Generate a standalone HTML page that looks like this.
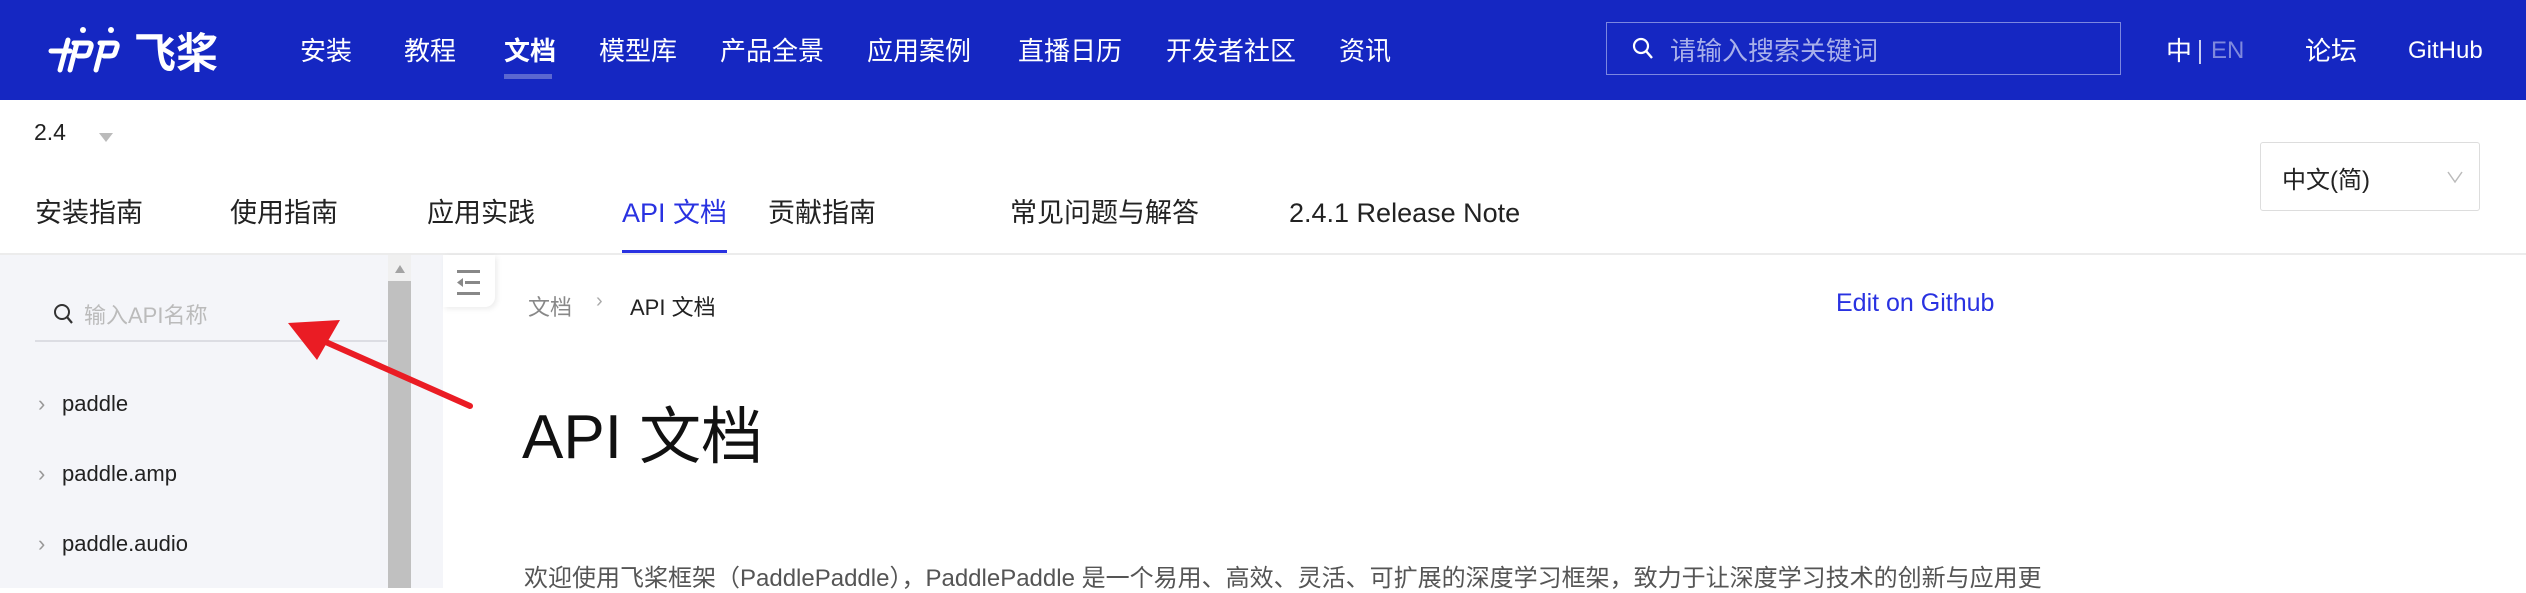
<!DOCTYPE html>
<html><head><meta charset="utf-8"><style>
*{margin:0;padding:0;box-sizing:border-box}
body{width:2526px;height:588px;overflow:hidden;background:#fff;font-family:"Liberation Sans","Noto Sans CJK SC",sans-serif;position:relative}
.a{position:absolute;white-space:nowrap}
.hd{left:0;top:0;width:2526px;height:100px;background:#1527c2}
.nv{top:34px;font-size:26px;color:#fff;line-height:34px}
.tab{top:196px;font-size:27px;color:#222;line-height:34px}
.si{font-size:22px;color:#222;line-height:28px}
</style></head><body>
<div class="a hd"></div>
<svg class="a" style="left:48px;top:24px" width="180" height="54" viewBox="0 0 180 54">
<g stroke="#fff" stroke-width="5" fill="none" stroke-linecap="round">
<line x1="3" y1="27" x2="22" y2="27"/><line x1="20" y1="16" x2="12" y2="46"/>
<path d="M26 19 L40 19 Q44 19 43 23 L41 29 Q40 32 36 32 L30 32"/><line x1="29" y1="19" x2="22" y2="46"/>
<path d="M52 19 L66 19 Q70 19 69 23 L67 29 Q66 32 62 32 L56 32"/><line x1="55" y1="19" x2="48" y2="46"/>
</g>
<circle cx="35" cy="6" r="3" fill="#fff"/><circle cx="63" cy="6" r="3" fill="#fff"/>
<text x="86" y="44" font-size="42" font-weight="bold" fill="#fff" font-family="Noto Sans CJK SC,sans-serif">飞桨</text>
</svg>
<div class="a nv" style="left:300px">安装</div>
<div class="a nv" style="left:404px">教程</div>
<div class="a nv" style="left:504px;font-weight:bold">文档</div>
<div class="a" style="left:504px;top:74px;width:48px;height:5px;background:#5b67d0"></div>
<div class="a nv" style="left:599px">模型库</div>
<div class="a nv" style="left:720px">产品全景</div>
<div class="a nv" style="left:867px">应用案例</div>
<div class="a nv" style="left:1018px">直播日历</div>
<div class="a nv" style="left:1166px">开发者社区</div>
<div class="a nv" style="left:1339px">资讯</div>
<div class="a" style="left:1606px;top:22px;width:515px;height:53px;border:1px solid #7c87e0"></div>
<svg class="a" style="left:1632px;top:37px" width="22" height="24" viewBox="0 0 22 24"><circle cx="9" cy="9" r="7" stroke="#fff" stroke-width="2.2" fill="none"/><line x1="14" y1="14" x2="20" y2="21" stroke="#fff" stroke-width="2.4"/></svg>
<div class="a nv" style="left:1670px;color:#a9b0ea">请输入搜索关键词</div>
<div class="a nv" style="left:2166px">中</div>
<div class="a" style="left:2199px;top:40px;width:2px;height:24px;background:#c9cdf2"></div>
<div class="a nv" style="left:2211px;color:#7f89dd;font-size:24px">EN</div>
<div class="a nv" style="left:2305px">论坛</div>
<div class="a nv" style="left:2408px;font-size:24px">GitHub</div>

<div class="a" style="left:34px;top:119px;font-size:23px;color:#222">2.4</div>
<div class="a" style="left:99px;top:133px;width:0;height:0;border-left:7px solid transparent;border-right:7px solid transparent;border-top:9px solid #bbb"></div>
<div class="a tab" style="left:35px">安装指南</div>
<div class="a tab" style="left:230px">使用指南</div>
<div class="a tab" style="left:427px">应用实践</div>
<div class="a tab" style="left:622px;color:#2932e1">API 文档</div>
<div class="a" style="left:622px;top:250px;width:105px;height:4px;background:#2932e1"></div>
<div class="a tab" style="left:768px">贡献指南</div>
<div class="a tab" style="left:1010px">常见问题与解答</div>
<div class="a tab" style="left:1289px">2.4.1 Release Note</div>
<div class="a" style="left:2260px;top:142px;width:220px;height:69px;border:1px solid #ddd;border-radius:3px"></div>
<div class="a" style="left:2282px;top:160px;font-size:24px;color:#222">中文(简)</div>
<svg class="a" style="left:2446px;top:170px" width="18" height="14"><polyline points="2,2 9,12 16,2" stroke="#bbb" stroke-width="1.5" fill="none"/></svg>
<div class="a" style="left:0;top:253px;width:2526px;height:2px;background:#ececec"></div>

<div class="a" style="left:0;top:255px;width:443px;height:333px;background:#f4f5f9"></div>
<div class="a" style="left:388px;top:255px;width:23px;height:333px;background:#f0f0f0"></div>
<div class="a" style="left:388px;top:281px;width:23px;height:307px;background:#c0c0c0"></div>
<div class="a" style="left:395px;top:265px;width:0;height:0;border-left:5px solid transparent;border-right:5px solid transparent;border-bottom:8px solid #a3a3a3"></div>
<svg class="a" style="left:52px;top:302px" width="24" height="26" viewBox="0 0 24 26"><circle cx="10" cy="10" r="7" stroke="#333" stroke-width="2" fill="none"/><line x1="15" y1="15" x2="20" y2="21" stroke="#333" stroke-width="2.2"/></svg>
<div class="a si" style="left:84px;top:302px;color:#bbb">输入API名称</div>
<div class="a" style="left:35px;top:340px;width:352px;height:2px;background:#dcdde3"></div>
<div class="a si" style="left:38px;top:390px;color:#999">›</div><div class="a si" style="left:62px;top:390px">paddle</div>
<div class="a si" style="left:38px;top:460px;color:#999">›</div><div class="a si" style="left:62px;top:460px">paddle.amp</div>
<div class="a si" style="left:38px;top:530px;color:#999">›</div><div class="a si" style="left:62px;top:530px">paddle.audio</div>

<div class="a" style="left:443px;top:255px;width:52px;height:52px;background:#fff;border-radius:0 0 10px 0;box-shadow:2px 2px 6px rgba(0,0,0,.08)"></div>
<svg class="a" style="left:455px;top:266px" width="28" height="30"><rect x="2" y="4" width="23" height="3" fill="#888"/><rect x="10" y="15" width="15" height="3" fill="#888"/><polygon points="2,16.5 8,12 8,21" fill="#888"/><rect x="2" y="26" width="23" height="3" fill="#888"/></svg>

<svg class="a" style="left:270px;top:315px" width="215" height="100"><line x1="200" y1="91" x2="40" y2="20" stroke="#ea1c24" stroke-width="6" stroke-linecap="round"/><polygon points="18,8 70,5 47,45" fill="#ea1c24"/></svg>

<div class="a" style="left:528px;top:290px;font-size:22px;color:#888">文档</div>
<div class="a" style="left:596px;top:290px;font-size:20px;color:#aaa">›</div>
<div class="a" style="left:630px;top:290px;font-size:22px;color:#222">API 文档</div>
<div class="a" style="left:1836px;top:289px;font-size:25px;color:#2932e1">Edit on Github</div>
<div class="a" style="left:522px;top:400px;font-size:62px;color:#111;line-height:76px">API 文档</div>
<div class="a" style="left:524px;top:558px;font-size:24px;color:#555">欢迎使用飞桨框架（PaddlePaddle），PaddlePaddle 是一个易用、高效、灵活、可扩展的深度学习框架，致力于让深度学习技术的创新与应用更</div>
</body></html>
